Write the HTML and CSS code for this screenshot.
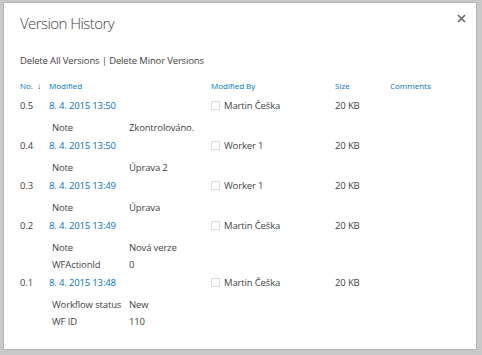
FILE: index.html
```html
<!DOCTYPE html>
<html>
<head>
<meta charset="utf-8">
<link rel="stylesheet" href="styles.css">
</head>
<body>
<div class="dialog">
  <div class="titlebar">
    <h1 class="title">Version History</h1>
    <span class="close">
      <svg width="9" height="9" viewBox="0 0 9 9"><path d="M1 1L8 8M8 1L1 8" stroke="#666" stroke-width="1.6"/></svg>
    </span>
  </div>
  <div class="actions">Delete All Versions | Delete Minor Versions</div>
  <div class="table">
    <div class="row head">
      <div class="c-no">No. <span class="arrow">&#8595;</span></div>
      <div class="c-mod">Modified</div>
      <div class="c-by">Modified By</div>
      <div class="c-size">Size</div>
      <div class="c-com">Comments</div>
    </div>

    <div class="row">
      <div class="c-no">0.5</div>
      <div class="c-mod link">8. 4. 2015 13:50</div>
      <div class="c-by"><span class="chk"></span>Martin Češka</div>
      <div class="c-size">20 KB</div>
      <div class="c-com"></div>
    </div>
    <div class="sub">
      <div class="prop"><span class="k">Note</span><span class="v">Zkontrolováno.</span></div>
    </div>

    <div class="row">
      <div class="c-no">0.4</div>
      <div class="c-mod link">8. 4. 2015 13:50</div>
      <div class="c-by"><span class="chk"></span>Worker 1</div>
      <div class="c-size">20 KB</div>
      <div class="c-com"></div>
    </div>
    <div class="sub">
      <div class="prop"><span class="k">Note</span><span class="v">Úprava 2</span></div>
    </div>

    <div class="row">
      <div class="c-no">0.3</div>
      <div class="c-mod link">8. 4. 2015 13:49</div>
      <div class="c-by"><span class="chk"></span>Worker 1</div>
      <div class="c-size">20 KB</div>
      <div class="c-com"></div>
    </div>
    <div class="sub">
      <div class="prop"><span class="k">Note</span><span class="v">Úprava</span></div>
    </div>

    <div class="row">
      <div class="c-no">0.2</div>
      <div class="c-mod link">8. 4. 2015 13:49</div>
      <div class="c-by"><span class="chk"></span>Martin Češka</div>
      <div class="c-size">20 KB</div>
      <div class="c-com"></div>
    </div>
    <div class="sub">
      <div class="prop"><span class="k">Note</span><span class="v">Nová verze</span></div>
      <div class="prop"><span class="k">WFActionId</span><span class="v">0</span></div>
    </div>

    <div class="row">
      <div class="c-no">0.1</div>
      <div class="c-mod link">8. 4. 2015 13:48</div>
      <div class="c-by"><span class="chk"></span>Martin Češka</div>
      <div class="c-size">20 KB</div>
      <div class="c-com"></div>
    </div>
    <div class="sub">
      <div class="prop"><span class="k">Workflow status</span><span class="v">New</span></div>
      <div class="prop"><span class="k">WF ID</span><span class="v">110</span></div>
    </div>
  </div>
</div>
</body>
</html>
```

FILE: styles.css
```css
html, body {
  margin: 0;
  padding: 0;
}
body {
  width: 482px;
  height: 355px;
  background: #c9c9c9;
  font-family: "Segoe UI", "Open Sans", "Noto Sans", sans-serif;
  color: #444;
  font-size: 9.5px;
  letter-spacing: -0.15px;
  overflow: hidden;
}
.dialog {
  box-sizing: border-box;
  margin: 2px 0 0 3px;
  width: 474px;
  height: 348px;
  background: #fff;
  border: 1px solid #b5b5b5;
  padding: 0 0 0 16px;
}
.titlebar {
  display: flex;
  justify-content: space-between;
  align-items: flex-start;
  height: 40px;
}
.title {
  margin: 9px 0 0 0;
  font-weight: 300;
  font-size: 15px;
  letter-spacing: -0.55px;
  line-height: 22px;
  color: #444;
}
.close {
  margin: 11px 10px 0 0;
  display: flex;
}
.actions {
  margin-top: 10px;
  line-height: 16px;
  color: #444;
}
.table {
  margin-top: 7px;
}
.row {
  display: grid;
  grid-template-columns: 29px 162px 124px 55px 1fr;
  line-height: 20px;
  height: 20px;
  white-space: nowrap;
}
.head {
  color: #0072c6;
  font-size: 8px;
  letter-spacing: 0;
}
.arrow {
  color: #333;
  font-size: 8px;
  margin-left: 2px;
}
.link {
  color: #0072c6;
}
.chk {
  display: inline-block;
  width: 7px;
  height: 7px;
  border: 1px solid #dcdcdc;
  margin-right: 4px;
  vertical-align: -1px;
}
.sub {
  padding: 3px 0 0 32px;
}
.prop {
  display: flex;
  line-height: 17px;
  height: 17px;
}
.k {
  width: 77px;
}
```
